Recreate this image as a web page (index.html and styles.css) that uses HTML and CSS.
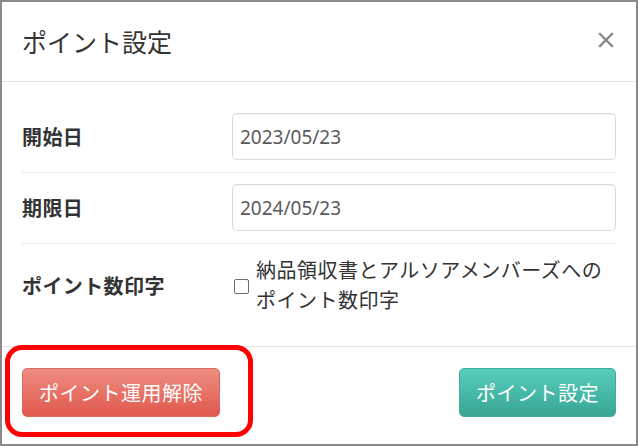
FILE: index.html
```html
<!DOCTYPE html>
<html lang="ja">
<head>
<meta charset="utf-8">
<title>ポイント設定</title>
<link rel="stylesheet" href="styles.css">
</head>
<body>
<div class="modal">
  <div class="modal-header">
    <h4 class="modal-title">ポイント設定</h4>
    <button class="close" type="button" aria-label="閉じる">
      <svg width="16" height="16" viewBox="0 0 16 16"><path d="M2 2 L14 14 M14 2 L2 14" stroke="#8a8a8a" stroke-width="2.4" stroke-linecap="square" fill="none"/></svg>
    </button>
  </div>
  <div class="modal-body">
    <div class="form-row">
      <label class="row-label">開始日</label>
      <input class="text-input" type="text" value="2023/05/23">
    </div>
    <div class="form-row">
      <label class="row-label">期限日</label>
      <input class="text-input" type="text" value="2024/05/23">
    </div>
    <div class="form-row last">
      <label class="row-label">ポイント数印字</label>
      <label class="check">
        <span class="check-box"></span>
        <span class="check-text">納品領収書とアルソアメンバーズへの<br>ポイント数印字</span>
      </label>
    </div>
  </div>
  <div class="modal-footer">
    <button class="btn btn-danger" type="button">ポイント運用解除</button>
    <button class="btn btn-success" type="button">ポイント設定</button>
  </div>
  <div class="annotation"></div>
</div>
</body>
</html>
```

FILE: styles.css
```css
html, body {
  margin: 0;
  padding: 0;
  background: #ffffff;
}
body {
  font-family: "Noto Sans CJK JP", "Noto Sans", sans-serif;
  color: #333333;
}
.modal {
  position: relative;
  width: 638px;
  height: 446px;
  box-sizing: border-box;
  border: 2px solid #8a8a8a;
  background: #ffffff;
  display: flex;
  flex-direction: column;
}
.modal-header {
  height: 79px;
  border-bottom: 1px solid #e5e5e5;
  display: flex;
  align-items: center;
  justify-content: space-between;
  padding: 0 22px 0 20px;
}
.modal-title {
  margin: 0;
  font-size: 25px;
  font-weight: 400;
  line-height: 36px;
  color: #333333;
  margin-top: -2px;
}
.close {
  border: 0;
  background: none;
  padding: 0;
  width: 16px;
  height: 16px;
  display: flex;
  margin-top: -4px;
}
.modal-body {
  padding: 20px 20px 19px 20px;
}
.form-row {
  display: grid;
  grid-template-columns: 210px 1fr;
  align-items: center;
  padding: 11px 0 12px 0;
  border-bottom: 1px solid #e3e6ea;
}
.form-row.last {
  border-bottom: 0;
}
.row-label {
  font-size: 20px;
  font-weight: 700;
  letter-spacing: 0.4px;
  color: #333333;
}
.text-input {
  height: 47px;
  box-sizing: border-box;
  border: 1px solid #d6dadf;
  border-radius: 5px;
  padding: 0 8px 0 7px;
  font-family: "Noto Sans", "Noto Sans CJK JP", sans-serif;
  font-size: 19px;
  color: #5a5a5a;
  width: 100%;
  outline: none;
  box-shadow: inset 0 1px 1px rgba(0,0,0,0.04);
}
.check {
  display: flex;
  align-items: center;
  gap: 7px;
  padding-left: 2px;
}
.check-box {
  width: 13px;
  height: 13px;
  border: 1px solid #6d6d6d;
  border-radius: 2px;
  flex: none;
  margin-top: 2px;
}
.check-text {
  font-size: 20px;
  letter-spacing: 0.5px;
  line-height: 30px;
  color: #333333;
}
.modal-footer {
  border-top: 1px solid #e5e5e5;
  flex: 1;
  display: flex;
  justify-content: space-between;
  align-items: flex-start;
  padding: 21px 20px 0 20px;
}
.btn {
  height: 49px;
  box-sizing: border-box;
  border-radius: 5px;
  font-family: "Noto Sans CJK JP", sans-serif;
  font-size: 20px;
  letter-spacing: 0.5px;
  color: #ffffff;
  padding: 0 16px;
  line-height: 47px;
}
.btn-danger {
  background: linear-gradient(#ef8d81, #e0584d);
  border: 1px solid #dd6a60;
}
.btn-success {
  background: linear-gradient(#58cdbd, #37a693);
  border: 1px solid #3aaf9b;
}
.annotation {
  position: absolute;
  left: 3px;
  top: 343px;
  width: 248px;
  height: 92px;
  box-sizing: border-box;
  border: 5px solid #ff0000;
  border-radius: 17px;
}
```
